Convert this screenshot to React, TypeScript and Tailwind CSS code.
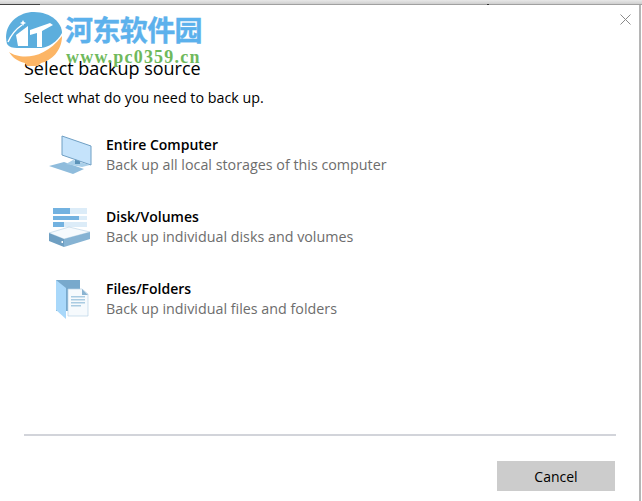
import React from "react";

const SANS = "font-['Open_Sans','Noto_Sans',sans-serif]";

function MonitorIcon() {
  return (
    <svg width="44" height="40" viewBox="0 0 44 40">
      <polygon points="0,31 15,27 35,34 24,39" fill="#8fbcdc" />
      <polygon points="17,29 24,25 41,30 33,32" fill="#a9cfe9" />
      <rect x="26" y="24" width="5" height="5" fill="#5c93b8" />
      <polygon points="13,1 42,11 42,30 13,20" fill="#c5e3fb" stroke="#6f9fc4" strokeWidth="1" />
    </svg>
  );
}

function DiskIcon() {
  return (
    <svg width="42" height="41" viewBox="0 0 42 41">
      <rect x="4" y="1" width="34" height="6" fill="#dcecf8" />
      <rect x="4" y="1" width="17" height="6" fill="#73b2e0" />
      <rect x="4" y="9" width="34" height="4" fill="#dcecf8" />
      <rect x="4" y="9" width="26" height="4" fill="#73b2e0" />
      <rect x="4" y="15" width="34" height="5" fill="#dcecf8" />
      <rect x="4" y="15" width="11" height="5" fill="#73b2e0" />
      <polygon points="0,26 20,20 41,25 15,32" fill="#f6fafd" stroke="#b5d0e3" strokeWidth="0.6" />
      <polygon points="0,26 15,32 15,40 0,34" fill="#6f9fc2" />
      <polygon points="15,32 41,25 41,32 15,40" fill="#86b3d3" />
      <rect x="12.5" y="34" width="1.5" height="2" fill="#ffffff" />
    </svg>
  );
}

function FilesIcon() {
  return (
    <svg width="34" height="41" viewBox="0 0 34 41" className="ml-[6px]">
      <polygon points="1,1 25,1 25,32 1,32" fill="#78a9cc" />
      <polygon points="1,1 11,9 11,40 1,31" fill="#a9d8fa" />
      <polygon points="13,10 27,10 33,15 33,37 13,37" fill="#f6fafd" stroke="#b9d3e5" strokeWidth="0.7" />
      <polygon points="27,10 33,16 27,16" fill="#8ab4d2" />
      <rect x="16" y="17" width="14" height="1.5" fill="#a9cbe2" />
      <rect x="16" y="20" width="14" height="1.5" fill="#a9cbe2" />
      <rect x="16" y="23" width="14" height="1.5" fill="#a9cbe2" />
      <rect x="16" y="26" width="10" height="1.5" fill="#a9cbe2" />
    </svg>
  );
}

function Option({ icon, title, desc }: { icon: React.ReactNode; title: string; desc: string }) {
  return (
    <div className="flex h-[72px] items-center">
      <div className="flex w-[82px] pl-[25px] pt-[2px]">{icon}</div>
      <div className="flex flex-col">
        <span className="text-[14px] leading-[21px] font-semibold text-black">{title}</span>
        <span className="text-[14.3px] leading-[20px] text-[#6d6d6d]">{desc}</span>
      </div>
    </div>
  );
}

function Watermark() {
  return (
    <div className="absolute left-[5px] top-[11px] flex">
      <svg width="58" height="56" viewBox="0 0 58 56">
        <path d="M4 41 C14 48 38 50 57 25 C57 40 46 50 36 52 L33 55 L22 55 L20 52 C12 50 7 46 4 41 Z" fill="#fcb565" />
        <path d="M2 33 C-3 15 12 1 29 1 C46 1 57 12 57 22 C52 31 44 36 36 37 L12 37 C8 37 4 36 2 33 Z" fill="#5caedd" />
        <polygon points="11,24 23,15 23,35 13,35" fill="#ffffff" />
        <polygon points="25,19 45,12 48,14 37,20 37,36 32,36 32,22 25,24" fill="#ffffff" />
        <path d="M3 31 Q8 20 17 14" fill="none" stroke="#ffffff" strokeWidth="1.5" />
        <polygon points="18,9 19,11 21,12 19,13 18,15 17,13 15,12 17,11" fill="#ffffff" />
      </svg>
      <div className="ml-[2px] flex flex-col">
        <span className="text-[28px] leading-[36px] font-bold tracking-[-0.6px] text-[#5cb1ec] [-webkit-text-stroke:0.4px_#5cb1ec] font-['Noto_Sans_CJK_SC',sans-serif]">
          河东软件园
        </span>
        <span className="ml-[1px] text-[18px] leading-[20px] font-bold text-[#6fb95c] tracking-[1.2px] font-['Liberation_Serif',serif]">
          www.pc0359.cn
        </span>
      </div>
    </div>
  );
}

export default function App() {
  return (
    <div className={`relative flex h-[501px] w-[642px] flex-col overflow-hidden bg-white ${SANS}`}>
      <div className="h-[4px] shrink-0 bg-gradient-to-b from-[#e8e8e8] to-[#cfcfcf]" />
      <div className="flex h-[1px] shrink-0">
        <div className="w-[40px] bg-[#444444]" />
        <div className="w-[447px] bg-[#a0a0a0]" />
        <div className="w-[2px] bg-[#333333]" />
        <div className="grow bg-[#a0a0a0]" />
      </div>
      <div className="flex min-h-0 grow border-r-[2px] border-[#b5b5b5] mr-[1px]">
        <div className="flex grow flex-col pl-[24px] pr-[23px]">
          <div className="flex justify-end pt-[9px] -mr-[15px]">
            <svg width="11" height="11" viewBox="0 0 11 11" className="text-[#8a8a8a]">
              <path d="M0.5 0.5 L10.5 10.5 M10.5 0.5 L0.5 10.5" stroke="currentColor" strokeWidth="1" />
            </svg>
          </div>
          <h1 className="mt-[31px] text-[18px] leading-[24px] text-black">Select backup source</h1>
          <p className="mt-[8px] text-[14.3px] leading-[20px] text-black">Select what do you need to back up.</p>
          <div className="mt-[10px] flex flex-col">
            <Option icon={<MonitorIcon />} title="Entire Computer" desc="Back up all local storages of this computer" />
            <Option icon={<DiskIcon />} title="Disk/Volumes" desc="Back up individual disks and volumes" />
            <Option icon={<FilesIcon />} title="Files/Folders" desc="Back up individual files and folders" />
          </div>
          <div className="mt-auto h-[2px] bg-[#d2d4da]" />
          <div className="flex justify-end pb-[10px] pt-[25px]">
            <button className="mr-[1px] h-[30px] w-[118px] bg-[#cccccc] text-[14px] text-black">Cancel</button>
          </div>
        </div>
      </div>
      <Watermark />
    </div>
  );
}
